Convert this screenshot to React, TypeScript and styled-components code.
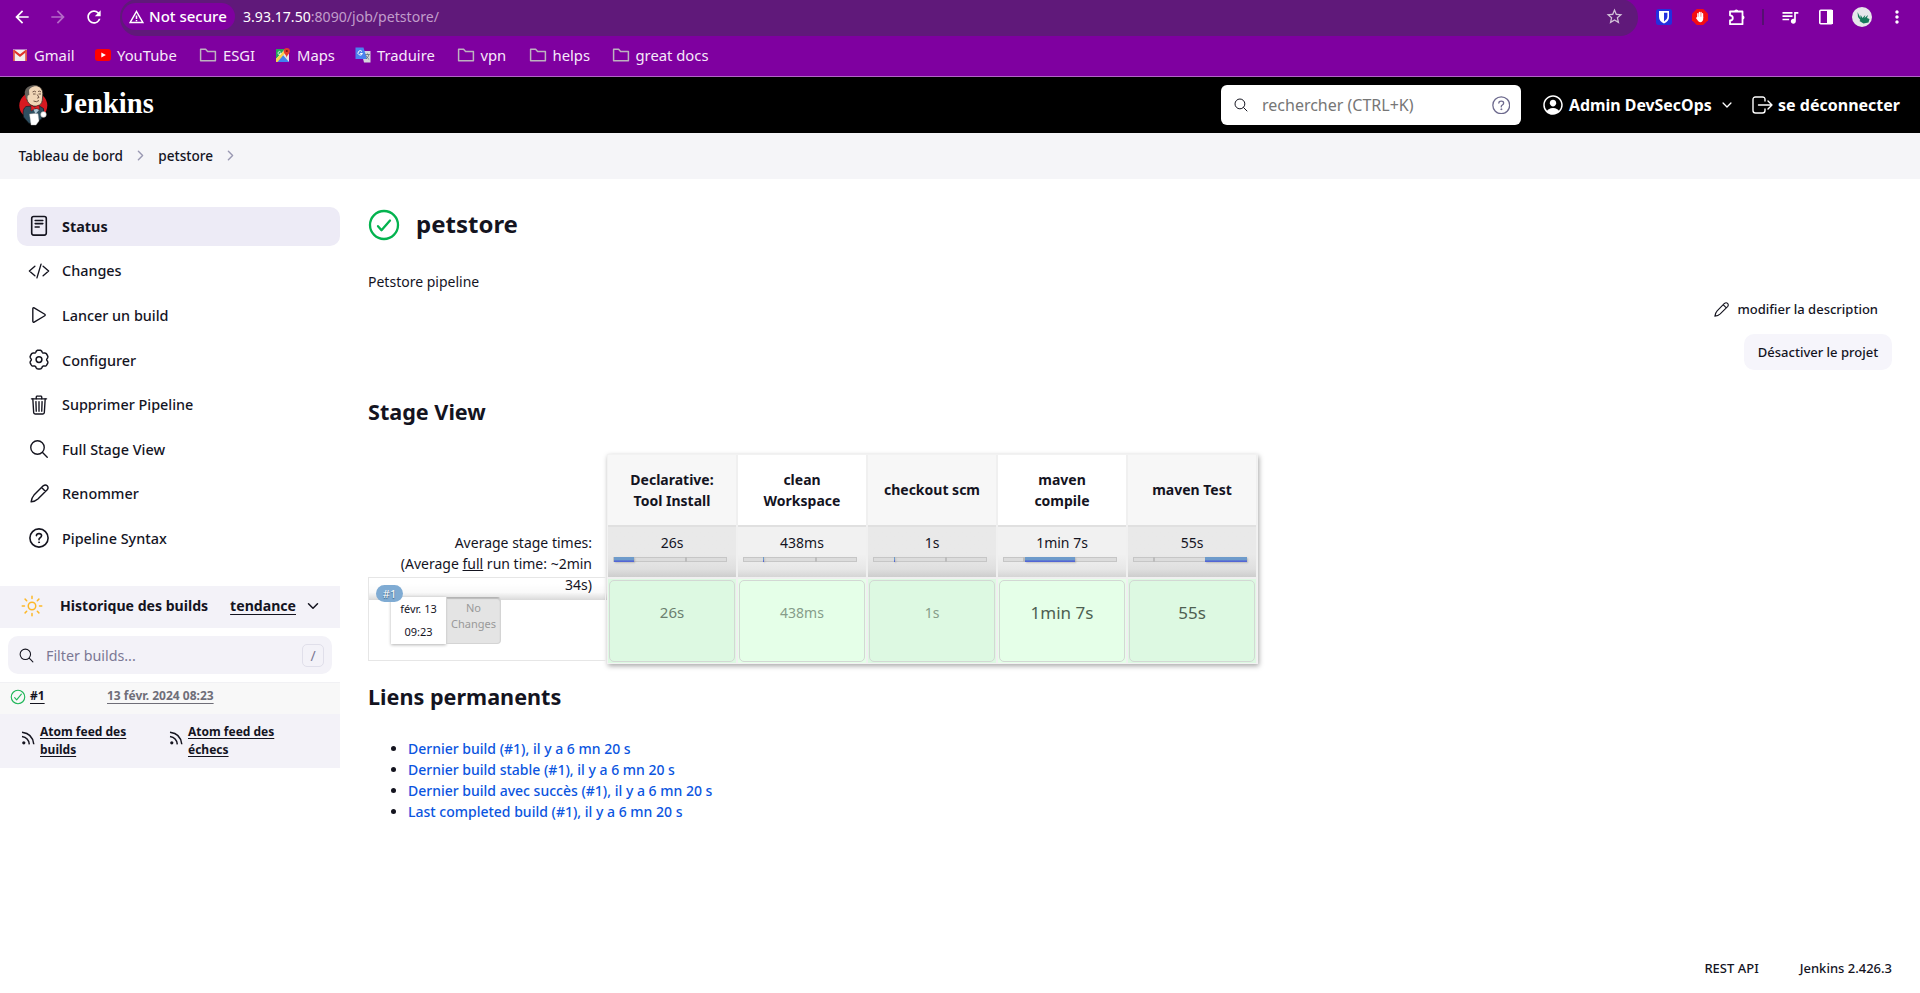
import React from 'react';
import styled, { createGlobalStyle, css } from 'styled-components';
import {
  IoTrashOutline, IoSearchOutline, IoSunnyOutline, IoPersonCircleOutline,
  IoChevronForward, IoChevronDown, IoCheckmarkCircleOutline, IoCodeSlashOutline, IoPlayOutline,
} from 'react-icons/io5';
import {
  MdArrowBack, MdArrowForward, MdRefresh, MdStarOutline, MdQueueMusic, MdMoreVert,
} from 'react-icons/md';

const Global = createGlobalStyle`
  *, *::before, *::after { box-sizing: border-box; }
  body {
    margin: 0; background: #fff; color: #14141f; overflow: hidden;
    font-family: "Noto Sans", sans-serif; font-size: 14px; line-height: 21px;
  }
  svg { display: block; flex: none; }
  h1, h2, ul, p { margin: 0; padding: 0; }
`;

const Page = styled.div`display: flex; flex-direction: column; height: 993px; width: 1920px;`;

/* Browser chrome */
const Chrome = styled.div`height: 77px; background: #7f00a0; border-bottom: 1px solid #b266c6; color: #fff;`;
const ToolBar = styled.div`display: flex; height: 36px; align-items: center;`;
const NavButtons = styled.div`display: flex; flex: none; width: 120px; padding: 0 0 2px 12px; gap: 16px; align-items: center;`;
const AddressBar = styled.div`
  display: flex; flex: none; align-items: center; width: 1518px; height: 37px; margin-top: -1px;
  border-radius: 18px; background: #60197a; padding: 0 14px 2px 2px;
`;
const Chip = styled.div`
  display: flex; align-items: center; gap: 5px; height: 27px; width: 113px; padding-left: 7px;
  border-radius: 14px; background: #7f00a0; font-size: 15px; font-weight: 500; white-space: nowrap;
`;
const Url = styled.div`flex: 1; margin-left: 8px; font-size: 14.1px; span { color: #c19dcb; }`;
const Extensions = styled.div`display: flex; align-items: center; padding: 0 0 2px 16px;`;
const Slot = styled.div<{ $w?: number }>`display: flex; flex: none; justify-content: center; width: ${p => p.$w ?? 36}px;`;
const Divider = styled.div`width: 2px; height: 16px; background: #560f72;`;
const BookmarkBar = styled.div`display: flex; height: 40px; align-items: center; padding: 0 0 2px 12px;`;
const Bookmark = styled.div<{ $w: number }>`
  display: flex; align-items: center; width: ${p => p.$w}px; gap: 6px; font-size: 14.8px; color: #f6e9fa; white-space: nowrap;
`;

/* Jenkins header */
const Header = styled.header`display: flex; align-items: center; height: 56px; background: #000; color: #fff; padding: 0 20px 0 18px;`;
const Brand = styled.div`
  display: flex; align-items: center; gap: 11px; flex: 1;
  font: bold 28.6px/40px "Liberation Serif", serif;
  span { padding-bottom: 3px; }
`;
const SearchBox = styled.div`
  display: flex; align-items: center; width: 300px; height: 40px; border-radius: 6px; background: #fff;
  padding: 0 10px 0 12px; color: #14141f; font-size: 16px;
  span { flex: 1; margin-left: 13px; color: #767676; }
  div { color: #6d6a8e; }
`;
const UserLink = styled.div`
  display: flex; align-items: center; gap: 4px; width: 210px; margin-left: 20px; font-size: 15.9px; font-weight: 700; white-space: nowrap;
`;
const LogoutLink = styled.div`
  display: flex; align-items: center; justify-content: space-between; width: 148px; margin-left: 1px; font-size: 16px; font-weight: 700; white-space: nowrap;
`;
const Crumbs = styled.nav`
  display: flex; align-items: center; height: 46px; background: #f5f5f8; padding: 0 0 1px 18.4px; font-weight: 500; font-size: 13.6px;
  svg { margin: 0 10.2px; color: #9a99b3; }
`;

/* Side panel */
const Body = styled.div`display: flex; flex: 1;`;
const Side = styled.aside`width: 340px; padding-top: 28px;`;
const Tasks = styled.div`display: flex; flex-direction: column; gap: 6px; padding-left: 17px;`;
const Task = styled.div<{ $active?: boolean }>`
  display: flex; align-items: center; gap: 11px; height: 38.6px; padding-left: 10px; border-radius: 10px;
  font-size: 14.4px; font-weight: ${p => (p.$active ? 700 : 500)}; background: ${p => (p.$active ? '#edebf6' : 'none')};
`;
const History = styled.section`margin-top: 28px;`;
const HistoryHead = styled.div`
  display: flex; align-items: center; height: 42px; background: #f3f2f8; padding: 0 0 2px 12px; font-size: 14.1px; font-weight: 700;
  span { margin-left: 8px; }
  u { margin: 0 9px 0 auto; text-underline-offset: 3px; text-decoration-thickness: 1px; }
  > svg { margin-right: 19px; }
`;
const Filter = styled.div`
  display: flex; align-items: center; height: 38px; margin: 8px; border-radius: 10px; background: #f3f2f8;
  padding: 1px 8px 0 10px; font-size: 14.3px; color: #7b7894;
  span { flex: 1; margin-left: 11px; }
`;
const KeyCap = styled.kbd`
  display: flex; align-items: center; justify-content: center; width: 22px; height: 23px; border: 1px solid #e0dfea;
  border-radius: 5px; font: 14px "Noto Sans", sans-serif;
`;
const BuildRow = styled.div`
  display: flex; align-items: center; height: 32px; background: #f8f8f8; border-top: 1px solid #f1f1f4; padding: 0 0 6px 9px;
  font-size: 12px; font-weight: 700;
  svg { margin-top: 4px; }
  u { text-underline-offset: 3px; }
`;
const BuildLink = styled.div`width: 77px; margin-left: 3px;`;
const BuildDate = styled.u`color: #6f6e78;`;
const Feeds = styled.div`display: flex; height: 54px; background: #f3f2f8; padding: 9px 0 0 21px;`;
const Feed = styled.div`
  display: flex; align-items: flex-start; gap: 5px; width: 148px; font-size: 12px; font-weight: 700; line-height: 18px;
  u { width: 90px; text-underline-offset: 2px; }
  svg { margin-top: 8px; }
`;

/* Main panel */
const Main = styled.main`flex: 1; display: flex; flex-direction: column; padding: 28px 28px 0 28px;`;
const TitleRow = styled.div`
  display: flex; align-items: center; height: 36px; gap: 16px;
  h1 { font-size: 24px; font-weight: 700; line-height: 34px; padding-bottom: 2px; }
`;
const Description = styled.p`margin-top: 28px;`;
const Actions = styled.div`display: flex; flex-direction: column; align-items: flex-end; height: 78px;`;
const EditLink = styled.div`display: flex; align-items: center; gap: 8px; height: 35px; margin: 0 14px 7px 0; font-size: 13px; font-weight: 500;`;
const Button = styled.div`
  display: flex; align-items: center; justify-content: center; width: 148px; height: 36px; border-radius: 10px; background: #f6f5fb;
  font-size: 13px; font-weight: 500;
`;
const Heading = styled.h2<{ $mt: number }>`margin-top: ${p => p.$mt}px; font-size: 21.6px; font-weight: 700; line-height: 32px;`;
const StageView = styled.div`display: flex; height: 210px; margin-top: 26px;`;
const RunColumn = styled.div`width: 239px; padding-top: 70px;`;
const Average = styled.div`
  height: 76px; padding: 8px 15px 0 0; text-align: right; margin-bottom: -23px;
  background: linear-gradient(to bottom, rgba(0,0,0,0) 78%, rgba(0,0,0,.025) 90%, rgba(0,0,0,.15));
`;
const Run = styled.div`
  position: relative; height: 84px; width: 238px; border: 1px solid #e6e6e6; border-right-color: #efefef; padding: 19px 0 0 22px; display: flex; align-items: flex-start;
`;
const RunBadge = styled.div`
  position: absolute; left: 7px; top: 7px; width: 27px; height: 17px; border-radius: 9px; background: #7fabd3;
  color: #fff; font-size: 11px; line-height: 18px; text-align: center; text-shadow: 0 1px 1px #33577a;
`;
const RunDate = styled.div`
  width: 55px; height: 47px; background: #fff; box-shadow: 0 1px 3px rgba(0,0,0,.3); font-size: 11px; line-height: 23px; text-align: center;
`;
const NoChanges = styled.div`
  width: 55px; height: 47px; border-radius: 0 4px 4px 0; background: #e4e4e4; border: 1px solid #d4d4d4; border-top-color: #b4b4b4;
  box-shadow: inset 0 1px 1px #bbb; padding-top: 2px; color: #999; font-size: 11px; line-height: 16px; text-align: center;
`;
const Stages = styled.div`
  display: flex; width: 651px; height: 210px; border: 1px solid #f2f2f2; background: #f0f0f0; gap: 2px; box-shadow: 1px 2px 5px rgba(0,0,0,.35);
`;
const Stage = styled.div<{ $alt: boolean }>`
  display: flex; flex: none; flex-direction: column; width: 128px;
  ${p => p.$alt
    ? css`--head: #f7f7f7; --avg: #e9e9e9; --edge: #cdcdcd; --ok: #ddf9e2;`
    : css`--head: #fff; --avg: #f1f1f1; --edge: #d5d5d5; --ok: #e5ffe8;`}
`;
const StageName = styled.div`
  display: flex; align-items: center; justify-content: center; text-align: center; height: 72px; padding: 0 14px 1px; background: var(--head);
  border-bottom: 2px solid #e0e0e0; font-weight: 700;
`;
const StageAverage = styled.div`
  height: 50px; padding-top: 5px; text-align: center;
  background: linear-gradient(to bottom, var(--avg) 55%, color-mix(in srgb, var(--avg), var(--edge) 35%) 84%, var(--edge));
`;
const Track = styled.div`
  display: flex; width: 114px; height: 5px; margin: 4px 0 0 5px; background: #dcdcdc; border: 1px solid #c6c6c6;
`;
const Gap = styled.div<{ $w: number }>`flex: none; width: ${p => p.$w}px;`;
const Mark = styled.div`flex: none; width: 2px; height: 5px; margin-top: -1px; background: #bdbdbd;`;
const Bar = styled.div<{ $w: number }>`
  flex: none; width: ${p => p.$w}px; height: 5px; margin-top: -1px; background: linear-gradient(#6e9bcb 50%, #5365d4 85%);
  box-shadow: 1px 1px 2px rgba(0,0,0,.18);
`;
const StageCell = styled.div`flex: 1; margin-top: 2px; padding: 1px; background: var(--ok);`;
const StageResult = styled.div<{ $size: number; $color: string }>`
  height: 82px; display: flex; align-items: center; justify-content: center; border: 1px solid #d3d8d4; border-radius: 5px;
  padding-bottom: 17px; font-size: ${p => p.$size}px; color: ${p => p.$color};
`;
const Links = styled.ul`
  margin-top: 25px; padding-left: 40px; color: #14141f; font-weight: 500;
  a { color: #0b55e0; }
`;
const Footer = styled.footer`display: flex; justify-content: flex-end; gap: 41px; margin-top: auto; height: 35px; font-size: 13px; font-weight: 500;`;

const Pencil = ({ size }: { size: number }) => (
  <svg width={size} height={size} viewBox="0 0 20 20" fill="none" stroke="currentColor" strokeWidth="1.5" strokeLinejoin="round">
    <path d="M1.2 18.800Q1.600 14.500 4.200 11.700L13.900 1.900Q16.300.1 18.100 1.900t0 4.200L8.300 15.800Q5.500 18.400 1.200 18.800ZM12.200 3.600l4.200 4.200" />
  </svg>
);
const Document = () => (
  <svg width="22" height="22" viewBox="0 0 22 22" fill="none" stroke="currentColor" strokeWidth="1.6" strokeLinecap="round">
    <rect x="3.700" y="1.500" width="14.600" height="18.600" rx="2" /><path d="M7.200 5.500h7.600M7.200 8.600h7.600M7.200 12h4" />
  </svg>
);
/* Six-lobed cog outline: broad lobes with narrow valleys between them */
const cogPoints = Array.from({ length: 120 }, (_, i) => {
  const t = (i * Math.PI) / 60;
  const r = 8.8 + 0.85 * Math.cos(6 * t) - 0.3 * Math.cos(12 * t);
  return `${(11 + r * Math.sin(t)).toFixed(2)},${(10.6 - r * Math.cos(t)).toFixed(2)}`;
}).join(' ');
const Cog = () => (
  <svg width="22" height="22" viewBox="0 0 22 22" fill="none" stroke="currentColor" strokeWidth="1.5" strokeLinejoin="round">
    <polygon points={cogPoints} /><circle cx="11" cy="10.600" r="2.900" />
  </svg>
);
const Help = ({ size, weight }: { size: number; weight: number }) => (
  <svg width={size} height={size} viewBox="0 0 20 20" fill="none" stroke="currentColor" strokeWidth={weight} strokeLinecap="round">
    <circle cx="10" cy="10" r="9.100" /><path d="M7.400 7.600Q7.600 5.600 10 5.600t2.600 2q0 1.300-1.400 2.100T10 11.700" />
    <circle cx="10" cy="14.300" r=".55" fill="currentColor" strokeWidth=".9" />
  </svg>
);
const Folder = () => (
  <svg width="18" height="16" viewBox="0 0 18 16" fill="none" stroke="#bdb3bf" strokeWidth="1.5" strokeLinejoin="round">
    <path d="M1.600 2.200h5l2 2.200h7.800v9.400H1.600z" />
  </svg>
);
const Rss = () => (
  <svg width="14" height="14" viewBox="0 0 14 14" fill="none" stroke="currentColor" strokeWidth="1.5">
    <circle cx="2.800" cy="11.800" r="1.600" fill="currentColor" stroke="none" />
    <path d="M1 5.500Q7.600 6.500 8.300 13.300M1 1.200Q11.800 2.400 12.800 13.300" />
  </svg>
);
const Gmail = () => (
  <svg width="16" height="16" viewBox="0 0 16 16">
    <path d="M1 2.500h14v11.500H1z" fill="#f1eeee" /><path d="m1.500 3.500 6.500 5 6.500-5" fill="none" stroke="#e0322a" strokeWidth="2.200" />
    <path d="M1 3h1.800v11H1zM13.200 3H15v11h-1.800z" fill="#dd5149" />
  </svg>
);
const YouTube = () => (
  <svg width="16" height="12" viewBox="0 0 16 12"><rect width="16" height="12" rx="3" fill="#f00" /><path d="m6.300 3.400 4.600 2.600-4.600 2.600z" fill="#fff" /></svg>
);
const Maps = () => (
  <svg width="16" height="16" viewBox="0 0 16 16">
    <rect x="1" y="2" width="13" height="13" rx="1" fill="#e8e6e3" /><path d="M1 2h9L1 12z" fill="#23a35a" />
    <path d="m1 15 7-7 6 7z" fill="#3f83f0" /><path d="m1 12 9-9.500 1.500 2L2.500 15H1z" fill="#fbd24a" />
    <path d="M11.700 11C11.700 8 8.700 6.800 8.700 4a3 3 0 0 1 6.200 0c0 2.800-3.200 4-3.200 7z" fill="#e33b2e" /><circle cx="11.800" cy="4" r="1.100" fill="#7d1511" />
    <path d="M5.600 5A1.500 1.500 0 1 0 6 6.300H4.700" fill="none" stroke="#fff" strokeWidth=".8" />
  </svg>
);
const Translate = () => (
  <svg width="16" height="16" viewBox="0 0 16 16">
    <path d="M6 4h9.500v11.500H9z" fill="#d5d8dc" /><path d="M.5.5h8L12 12H.5z" fill="#4a83ee" />
    <path d="M7 4.500A2.200 2.200 0 1 0 7.400 6.500H5.200" fill="none" stroke="#fff" strokeWidth="1" />
    <path d="M10.200 7.500h4.500M12.500 6.500v1M14 7.500q-.7 3-3 4.500M11 8.500q1 2.500 3.200 4" fill="none" stroke="#5e7280" strokeWidth=".8" />
  </svg>
);
const Butler = () => (
  <svg width="31" height="42" viewBox="0 0 31 42">
    <ellipse cx="15.300" cy="21.500" rx="14" ry="13.500" fill="#d71920" />
    <path d="M8 22.500Q4 25 5.500 33l5.500 6.500 12-4q4-5.500 2.500-11l-5-3z" fill="#2f4f60" stroke="#11191f" strokeWidth=".7" />
    <path d="M8.500 6Q12.500 1 19 1.700q5.800 1.800 5.800 8l-.5 6.500q-.7 5-5.500 6-6.600.5-9.300-5L8 12z" fill="#f0d6b7" stroke="#342d27" strokeWidth=".8" />
    <path d="M8.500 15.500Q4.300 6.500 9.800 3 14 .4 19.500 1.800 13 2 11 6l.3 5q-2.200 0-1.800 3z" fill="#66615b" />
    <path d="M14.500 8q2-1.700 3.500 0M20 7.500q2-1 3 .5M15 10h2.600M20.500 10H23M19.200 10.500l1.800 3-1.800.7M15.500 17q3 1.700 5.500-.5" fill="none" stroke="#4e3529" strokeWidth=".8" />
    <path d="m13 21 3.500 2 4.500-2 .7 4.500-4.200-1-4.500 2.500z" fill="#e02029" stroke="#511" strokeWidth=".5" />
    <path d="m15.500 25.500 2 4.500 3.500-4-2-1z" fill="#adc7d5" />
    <path d="M11.500 30q5-1 8.500-.3l1 7.300-3 4h-5z" fill="#fff" stroke="#aaa" strokeWidth=".4" />
    <circle cx="25.500" cy="30.500" r="2.900" fill="#fff" stroke="#777" strokeWidth=".4" />
  </svg>
);
const Shield = () => (
  <svg width="16" height="16" viewBox="0 0 16 16"><rect width="16" height="16" rx="2.500" fill="#2330de" /><path d="M3 2h10v6q0 4-5 6.500Q3 12 3 8z" fill="#fff" /><path d="M8 3.700h3.400V8q0 2.500-3.400 4.500z" fill="#2330de" /></svg>
);
const StopHand = () => (
  <svg width="16" height="16" viewBox="0 0 17 17"><path d="M5 0h7l5 5v7l-5 5H5l-5-5V5z" fill="#f40d12" />
    <path d="M6.200 9V5M7.900 9V3.700M9.600 9V3.700M11.200 9V5" stroke="#fff" strokeWidth="1.400" strokeLinecap="round" /><path d="M5.500 8.200h6.400V11q-.5 3-3 3-2 0-4.700-4.500z" fill="#fff" /></svg>
);
const Puzzle = () => (
  <svg width="18" height="18" viewBox="0 0 18 18" fill="none" stroke="#fff" strokeWidth="1.800" strokeLinejoin="round">
    <path d="M2 3.500h12.500v12.700H2v-3.700q2.800-.2 2.800-2.600T2 7.300z" /><path d="M6.300 3.500a2 2 0 0 1 4 0zM14.500 7.500a2 2 0 0 1 0 4z" fill="#fff" stroke="none" />
  </svg>
);
const SidePanel = () => (
  <svg width="16" height="16" viewBox="0 0 16 16"><rect x="1.800" y="1.300" width="12.400" height="13.400" rx="1" fill="none" stroke="#fff" strokeWidth="1.600" /><path d="M9 1h6v14H9z" fill="#fff" /></svg>
);
const Avatar = () => (
  <svg width="20" height="20" viewBox="0 0 20 20"><circle cx="10" cy="10" r="10" fill="#e6e6ea" />
    <path d="m5.500 5 2 4 .8 2 .4-3 1.800 3 2.800-3-.8 3 3.500-3-1 3 2.500 1-1 3.500-5 1-4-2.500.8-1-2.300-3z" fill="#17795c" /></svg>
);
const Warning = () => (
  <svg width="15" height="14" viewBox="0 0 15 14" fill="none" stroke="#fff" strokeWidth="1.500"><path d="M7.500 1.500 13.800 12.500H1.200zM7.500 5.500v3.600M7.500 10v1.300" /></svg>
);
const Logout = () => (
  <svg width="21" height="18" viewBox="0 0 21 18" fill="none" stroke="#fff" strokeWidth="1.400" strokeLinecap="round" strokeLinejoin="round">
    <path d="M13 5V3.500Q13 1 10.500 1h-7Q1 1 1 3.500v11Q1 17 3.500 17h7q2.500 0 2.500-2.500V13M6.500 9H20M16 5l4 4-4 4" />
  </svg>
);

const bookmarks: [string, React.ReactNode, number][] = [
  ['Gmail', <Gmail />, 83], ['YouTube', <YouTube />, 104], ['ESGI', <Folder />, 76], ['Maps', <Maps />, 80],
  ['Traduire', <Translate />, 101.5], ['vpn', <Folder />, 72], ['helps', <Folder />, 83], ['great docs', <Folder />, 120],
];

const tasks: [string, React.ReactNode][] = [
  ['Status', <Document />], ['Changes', <IoCodeSlashOutline size={22} />], ['Lancer un build', <IoPlayOutline size={22} />],
  ['Configurer', <Cog />], ['Supprimer Pipeline', <IoTrashOutline size={22} />],
  ['Full Stage View', <IoSearchOutline size={22} />],
  ['Renommer', <Pencil size={19} />], ['Pipeline Syntax', <Help size={20} weight={1.6} />],
];

type Segment = ['gap' | 'bar', number] | ['mark'];
interface StageData { name: string; time: string; track: Segment[]; size: number; color: string }
const stages: StageData[] = [
  { name: 'Declarative: Tool Install', time: '26s', track: [['bar', 20], ['gap', 51], ['mark']], size: 15, color: '#6b7f6f' },
  { name: 'clean Workspace', time: '438ms', track: [['gap', 19], ['bar', 1], ['gap', 51], ['mark']], size: 14, color: '#869c89' },
  { name: 'checkout scm', time: '1s', track: [['gap', 20], ['bar', 1], ['gap', 50], ['mark']], size: 14, color: '#869c89' },
  { name: 'maven compile', time: '1min 7s', track: [['gap', 19], ['mark'], ['bar', 50]], size: 17, color: '#4e5f51' },
  { name: 'maven Test', time: '55s', track: [['gap', 19], ['mark'], ['gap', 50], ['bar', 42]], size: 17, color: '#4e5f51' },
];

const links = [
  'Dernier build (#1), il y a 6 mn 20 s', 'Dernier build stable (#1), il y a 6 mn 20 s',
  'Dernier build avec succès (#1), il y a 6 mn 20 s', 'Last completed build (#1), il y a 6 mn 20 s',
];

const renderSegment = (s: Segment, i: number) =>
  s[0] === 'mark' ? <Mark key={i} /> : s[0] === 'bar' ? <Bar key={i} $w={s[1]} /> : <Gap key={i} $w={s[1]} />;

export default function App() {
  return (
    <Page>
      <Global />
      <Chrome>
        <ToolBar>
          <NavButtons><MdArrowBack size={20} /><MdArrowForward size={20} color="#b56ac8" /><MdRefresh size={20} /></NavButtons>
          <AddressBar>
            <Chip><Warning />Not secure</Chip>
            <Url>3.93.17.50<span>:8090/job/petstore/</span></Url>
            <MdStarOutline size={19} color="#d2c2d8" />
          </AddressBar>
          <Extensions>
            <Slot $w={20}><Shield /></Slot><Slot $w={52}><StopHand /></Slot><Slot $w={22}><Puzzle /></Slot>
            <Slot $w={30}><Divider /></Slot><Slot $w={24}><MdQueueMusic size={20} /></Slot><Slot $w={48}><SidePanel /></Slot>
            <Slot $w={24}><Avatar /></Slot><Slot $w={46}><MdMoreVert size={20} /></Slot>
          </Extensions>
        </ToolBar>
        <BookmarkBar>
          {bookmarks.map(([label, icon, w]) => <Bookmark key={label} $w={w}>{icon}{label}</Bookmark>)}
        </BookmarkBar>
      </Chrome>

      <Header>
        <Brand><Butler /><span>Jenkins</span></Brand>
        <SearchBox><IoSearchOutline size={16} /><span>rechercher (CTRL+K)</span><Slot $w={20}><Help size={18.5} weight={1.4} /></Slot></SearchBox>
        <UserLink><IoPersonCircleOutline size={24} />Admin DevSecOps<Slot $w={22}><IoChevronDown size={14} /></Slot></UserLink>
        <LogoutLink><Logout />se déconnecter</LogoutLink>
      </Header>
      <Crumbs>Tableau de bord<IoChevronForward size={15} />petstore<IoChevronForward size={15} /></Crumbs>

      <Body>
        <Side>
          <Tasks>
            {tasks.map(([label, icon], i) => <Task key={label} $active={i === 0}><Slot $w={24}>{icon}</Slot>{label}</Task>)}
          </Tasks>
          <History>
            <HistoryHead><Slot $w={40}><IoSunnyOutline size={24} color="#fdb827" /></Slot><span>Historique des builds</span><u>tendance</u><IoChevronDown size={16} /></HistoryHead>
            <Filter><IoSearchOutline size={17} color="#14141f" /><span>Filter builds...</span><KeyCap>/</KeyCap></Filter>
            <BuildRow><IoCheckmarkCircleOutline size={18} color="#1eb658" /><BuildLink><u>#1</u></BuildLink><BuildDate>13 févr. 2024 08:23</BuildDate></BuildRow>
            <Feeds><Feed><Rss /><u>Atom feed des builds</u></Feed><Feed><Rss /><u>Atom feed des échecs</u></Feed></Feeds>
          </History>
        </Side>

        <Main>
          <TitleRow>
            <svg width="32" height="32" viewBox="0 0 32 32" fill="none" stroke="#04b34f" strokeWidth="2.3" strokeLinecap="round" strokeLinejoin="round">
              <circle cx="16" cy="16" r="14" /><path d="m10 17.200 3.500 4L22 11.500" />
            </svg>
            <h1>petstore</h1>
          </TitleRow>
          <Description>Petstore pipeline</Description>
          <Actions>
            <EditLink><Pencil size={15} />modifier la description</EditLink>
            <Button>Désactiver le projet</Button>
          </Actions>
          <Heading $mt={26}>Stage View</Heading>
          <StageView>
            <RunColumn>
              <Average>Average stage times:<br />(Average <u>full</u> run time: ~2min<br />34s)</Average>
              <Run>
                <RunBadge>#1</RunBadge>
                <RunDate>févr. 13<br />09:23</RunDate>
                <NoChanges>No Changes</NoChanges>
              </Run>
            </RunColumn>
            <Stages>
              {stages.map((s, i) => (
                <Stage key={s.name} $alt={i % 2 === 0}>
                  <StageName>{s.name}</StageName>
                  <StageAverage>
                    {s.time}
                    <Track>{s.track.map(renderSegment)}</Track>
                  </StageAverage>
                  <StageCell><StageResult $size={s.size} $color={s.color}>{s.time}</StageResult></StageCell>
                </Stage>
              ))}
            </Stages>
          </StageView>
          <Heading $mt={17}>Liens permanents</Heading>
          <Links>{links.map(l => <li key={l}><a>{l}</a></li>)}</Links>
          <Footer><span>REST API</span><span>Jenkins 2.426.3</span></Footer>
        </Main>
      </Body>
    </Page>
  );
}
